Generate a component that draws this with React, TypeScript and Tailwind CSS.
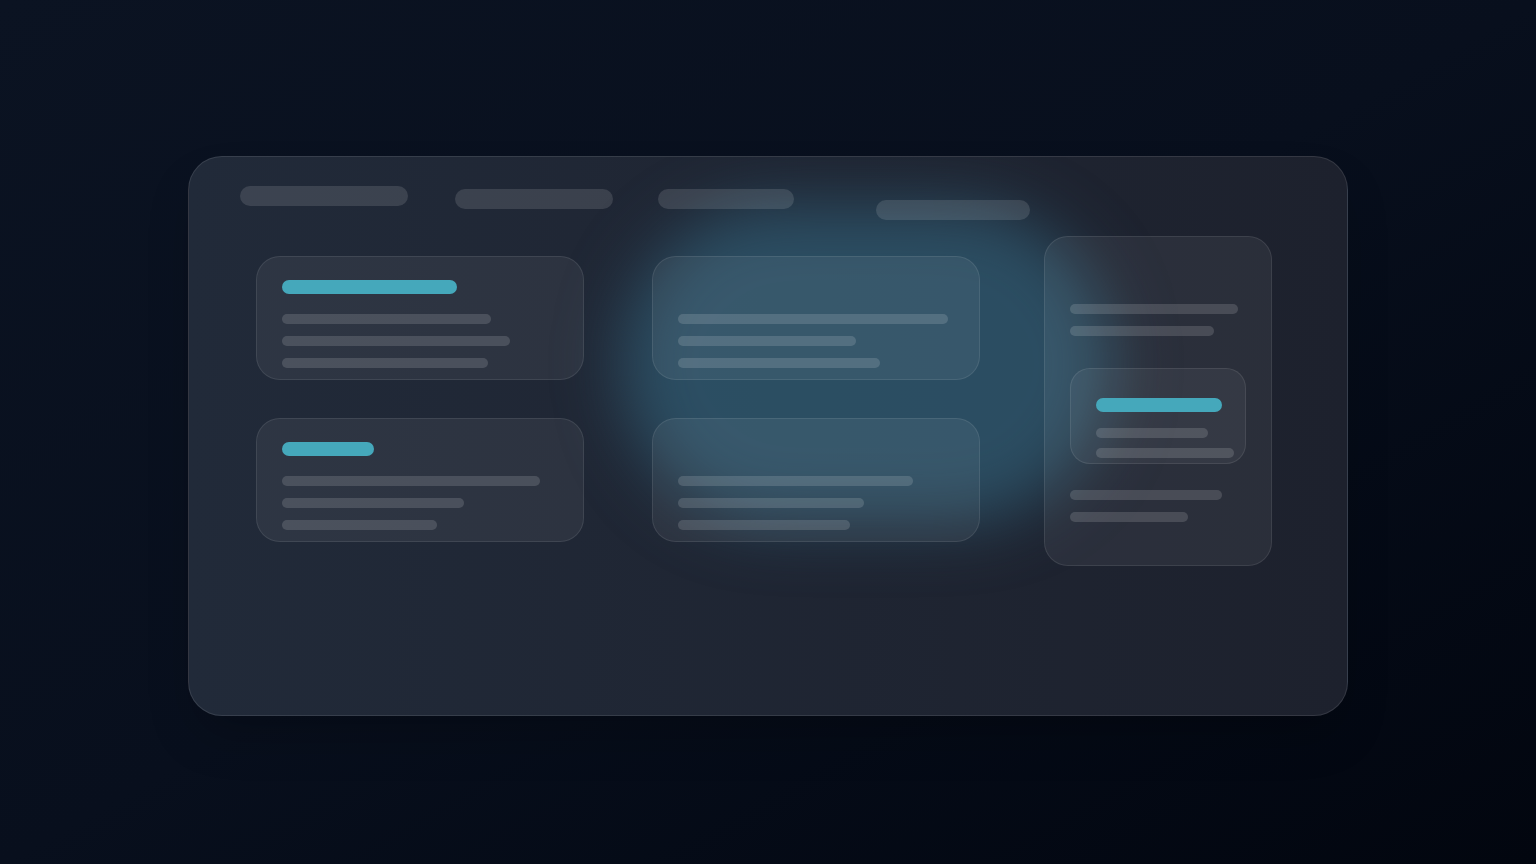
import React from 'react';

// skeleton placeholders for a glass dashboard mock
const Line = ({ w, tone = 'gray' }: { w: string; tone?: 'gray' | 'cyan' | 'none' }) => {
  if (tone === 'cyan') return <div className={`h-[14px] ${w} rounded-full bg-[#45a8bb]`} />;
  if (tone === 'none') return <div className={`h-[14px] ${w}`} />;
  return <div className={`h-[10px] ${w} rounded-full bg-white/[0.14]`} />;
};

const Card = ({ bar, lines }: { bar: string | null; lines: string[] }) => (
  <div className="relative z-10 h-[124px] w-[328px] rounded-[24px] border border-white/[0.09] bg-white/[0.06] pl-[25px] pt-[23px]">
    {bar ? <Line w={bar} tone="cyan" /> : <Line w="w-10" tone="none" />}
    <div className="mt-[20px] flex flex-col gap-[12px]">
      {lines.map((l, i) => (
        <Line key={i} w={l} />
      ))}
    </div>
  </div>
);

export default function App() {
  return (
    <div className="min-h-screen w-full bg-linear-to-br from-[#0b1322] via-[#080f1d] to-[#02060f] pt-[156px]" style={{ fontFamily: '"Inter", sans-serif' }}>
      <div className="relative mx-auto h-[560px] w-[1160px] overflow-hidden rounded-[34px] border border-white/[0.1] bg-linear-to-r from-[#212a39] to-[#1d212d] pl-[51px] pt-[29px] shadow-2xl">
        {/* glow behind the middle column */}
        <div className="absolute left-[432px] top-[48px] z-0 h-[318px] w-[490px] rounded-full bg-[#32647d]/65 blur-[32px]" />

        <div className="relative z-10 flex items-start">
          <div className="h-5 w-[168px] rounded-full bg-white/[0.12]" />
          <div className="ml-[47px] mt-[3px] h-5 w-[158px] rounded-full bg-white/[0.12]" />
          <div className="ml-[45px] mt-[3px] h-5 w-[136px] rounded-full bg-white/[0.12]" />
          <div className="ml-[82px] mt-[14px] h-5 w-[154px] rounded-full bg-white/[0.12]" />
        </div>

        <div className="mt-[16px] ml-[16px] flex items-start">
          <div className="mt-[20px] flex flex-col gap-[38px]">
            <Card bar="w-[175px]" lines={['w-[209px]', 'w-[228px]', 'w-[206px]']} />
            <Card bar="w-[92px]" lines={['w-[258px]', 'w-[182px]', 'w-[155px]']} />
          </div>
          <div className="ml-[68px] mt-[20px] flex flex-col gap-[38px]">
            <Card bar={null} lines={['w-[270px]', 'w-[178px]', 'w-[202px]']} />
            <Card bar={null} lines={['w-[235px]', 'w-[186px]', 'w-[172px]']} />
          </div>
          <div className="relative z-10 ml-[64px] h-[330px] w-[228px] rounded-[24px] border border-white/[0.09] bg-white/[0.06] pl-[25px] pt-[67px]">
            <div className="flex flex-col gap-[12px]">
              <Line w="w-[168px]" />
              <Line w="w-[144px]" />
            </div>
            <div className="mt-[32px] h-[96px] w-[176px] rounded-[20px] border border-white/[0.09] bg-white/[0.05] pl-[25px] pt-[29px]">
              <Line w="w-[126px]" tone="cyan" />
              <div className="mt-[16px] flex flex-col gap-[10px]">
                <Line w="w-[112px]" />
                <Line w="w-[138px]" />
              </div>
            </div>
            <div className="mt-[26px] flex flex-col gap-[12px]">
              <Line w="w-[152px]" />
              <Line w="w-[118px]" />
            </div>
          </div>
        </div>
      </div>
    </div>
  );
}
